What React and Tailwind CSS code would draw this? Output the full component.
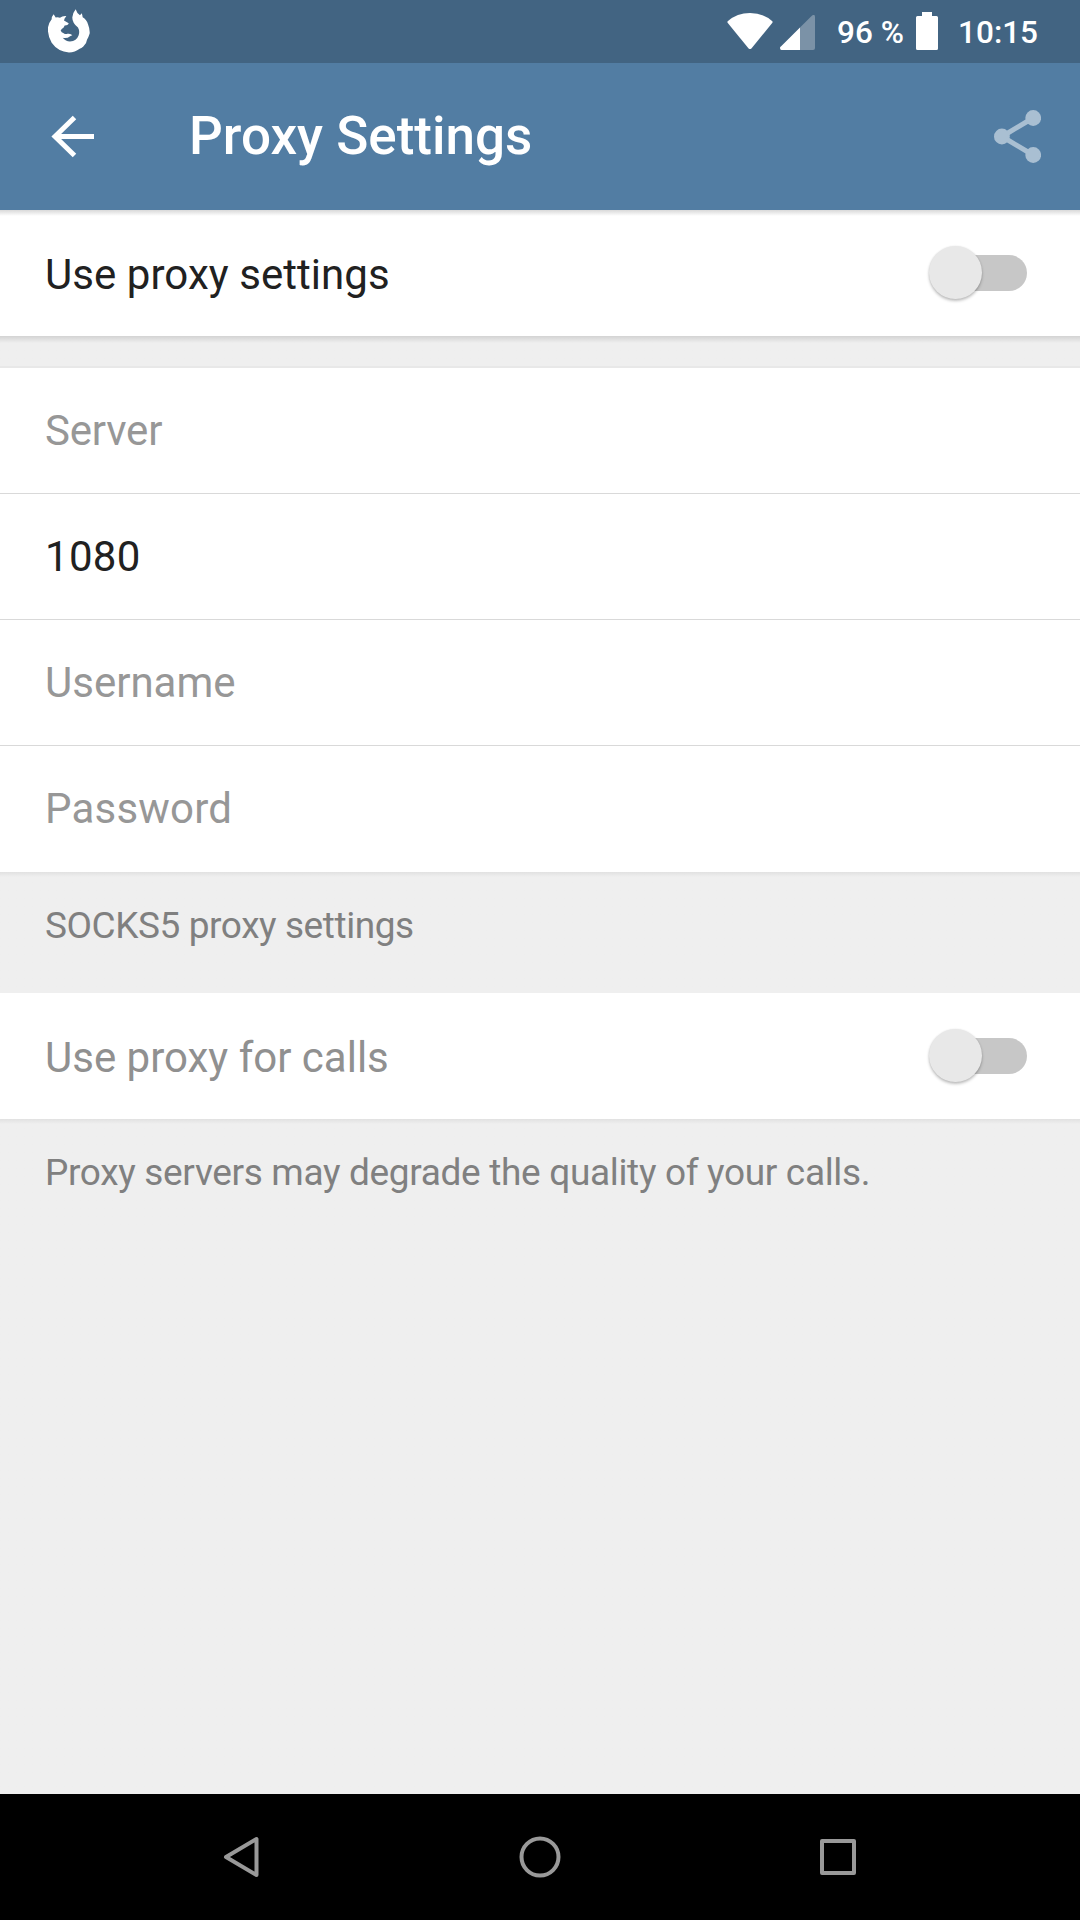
const Switch = () => (
  <div className="relative mr-[53px] flex h-[54px] w-[98px] items-center justify-end">
    <div className="h-9 w-[88px] rounded-full bg-[#c7c7c7]" />
    <div className="absolute left-0 top-0 size-[53px] rounded-full bg-[#e8e8e8] shadow-[0_2px_3px_rgba(0,0,0,0.25),0_0_2px_rgba(0,0,0,0.08)]" />
  </div>
);

const Field = ({ children, last, className }) => (
  <div
    className={`flex h-[126px] items-center px-[45px] text-[42px] leading-[50px] ${className} ${last ? "" : "border-b border-[#d9d9d9]"}`}
  >
    <span>{children}</span>
  </div>
);

export default function App() {
  return (
    <div className="flex h-[1920px] w-[1080px] flex-col overflow-hidden bg-[#efefef] font-['Roboto',sans-serif]">
      <div className="flex h-[63px] shrink-0 items-center bg-[#426482] text-[31.5px] font-medium leading-[37px] text-white">
        <svg className="mb-[2px] ml-12 h-[44px] w-[42px]" viewBox="144 27 126 131" fill="#fff">
          <path d="M161 42 L167 52 Q174 50 180 53 Q187 47 199 48 Q193 53 192 61 L206 69 Q206 74 194 76 L191 82 Q184 86 182 91 Q184 97 191 99 Q196 103 202 101 Q212 99 217 105 Q213 106 209 109 Q203 115 188 113 Q197 124 210 124 Q230 122 236 105 Q240 93 234 82 Q216 68 217 51 Q218 38 227 27 Q230 38 240 45 L245 39 Q248 46 248 51 Q260 58 264 72 Q270 87 269 100 Q266 110 261 119 Q260 131 250 139 Q244 145 239 146 Q225 157 207 157 Q174 155 155 128 Q142 105 144 81 Q146 68 155 57 Q155 48 161 42 Z" />
        </svg>
        <div className="grow" />
        <svg className="mb-[1px] h-9 w-[46px]" viewBox="0 0 46 36" fill="#fff">
          <path d="M.7 8.2 Q10 0 23 0 Q36 0 45.300 8.200 Q46 9 45.200 10 L24.600 35.200 Q23 37 21.400 35.200 L.8 10 Q0 9 .7 8.200Z" />
        </svg>
        <svg className="ml-[7px] mt-[2px] h-[35px] w-[35px]" viewBox="0 0 35 35" fill="#fff">
          <path opacity=".3" d="M20 12.500 L31.600 .9 Q35 -1.500 35 2 V33 Q35 35 33 35 H20Z" />
          <path d="M20 12.500 V35 H1.500 Q0 35 0 33 Q0 32 .9 31.600Z" />
        </svg>
        <div className="ml-[22px] mt-[1px] w-[79px] whitespace-nowrap">96 %</div>
        <svg className="mb-[1px] h-[38px] w-[22px]" viewBox="0 0 22 38" fill="#fff">
          <path d="M6 0H16V4H20.500Q22 4 22 5.500V36.500Q22 38 20.500 38H1.500Q0 38 0 36.500V5.500Q0 4 1.500 4H6Z" />
        </svg>
        <div className="ml-5 mr-[42px] mt-[1px] whitespace-nowrap">10:15</div>
      </div>

      <div className="flex h-[147px] shrink-0 items-center bg-[#527da3]">
        <svg className="ml-[51px] h-[43px] w-[43px]" viewBox="0 0 43 43" fill="none" stroke="#fff" strokeWidth="5">
          <path d="M43 21.500H4M23.500 2.500L4 21.500L23.500 40.500" />
        </svg>
        <h1 className="mb-[1px] ml-[95px] text-[53px] font-medium leading-[62px] text-white">Proxy Settings</h1>
        <div className="grow" />
        <svg className="mr-[39px] h-[53px] w-[47px]" viewBox="0 0 47 53" fill="#a9bfd2">
          <path d="M39 8L8 26.500L39 45" fill="none" stroke="#a9bfd2" strokeWidth="5" />
          <circle cx="39.200" cy="8" r="7.900" />
          <circle cx="7.900" cy="26.500" r="7.900" />
          <circle cx="39.200" cy="45" r="7.900" />
        </svg>
      </div>

      <div className="flex h-[126px] shrink-0 items-center justify-between bg-white bg-linear-to-b from-[#d9d9d9] to-white to-[6px] pl-[45px] text-[42px] leading-[50px] text-[#212121]">
        <span className="mt-[3px] tracking-[0.05px]">Use proxy settings</span>
        <Switch />
      </div>
      <div className="h-8 shrink-0 border-b-2 border-[#e8e8e8] bg-linear-to-b from-[#d3d3d3] to-[#efefef] to-[7px]" />

      <div className="shrink-0 bg-white">
        <Field className="tracking-[-0.2px] text-[#979797]">Server</Field>
        <Field className="tracking-[0.3px] text-[#212121]">1080</Field>
        <Field className="text-[#979797]">Username</Field>
        <Field className="tracking-[0.2px] text-[#979797]" last>Password</Field>
      </div>
      <div className="h-[121px] shrink-0 bg-linear-to-b from-[#e1e1e1] to-[#efefef] to-[5px] px-[45px] pt-[32px] text-[37px] leading-[43px] tracking-[-0.42px] text-[#808080]">
        SOCKS5 proxy settings
      </div>

      <div className="flex h-[126px] shrink-0 items-center justify-between bg-white pl-[45px] text-[42px] leading-[50px] text-[#909090]">
        <span className="mt-[3px]">Use proxy for calls</span>
        <Switch />
      </div>
      <div className="grow bg-linear-to-b from-[#e1e1e1] to-[#efefef] to-[5px] px-[45px] pt-[32px] text-[37px] leading-[43px] tracking-[-0.33px] text-[#808080]">
        Proxy servers may degrade the quality of your calls.
      </div>

      <div className="flex h-[126px] shrink-0 items-center bg-black">
        <svg className="ml-[222px] h-[42px] w-[38px]" viewBox="0 0 38 42" fill="none" stroke="#999" strokeWidth="4" strokeLinejoin="round">
          <path d="M34.500 3V39L4 21Z" />
        </svg>
        <svg className="ml-[259px] h-[42px] w-[42px]" viewBox="0 0 42 42" fill="none" stroke="#999" strokeWidth="4">
          <circle cx="21" cy="21" r="18.500" />
        </svg>
        <svg className="ml-[259px] h-[38px] w-[36px]" viewBox="0 0 36 38" fill="none" stroke="#999" strokeWidth="4" strokeLinejoin="round">
          <path d="M2 3H34V35H2Z" />
        </svg>
      </div>
    </div>
  );
}
